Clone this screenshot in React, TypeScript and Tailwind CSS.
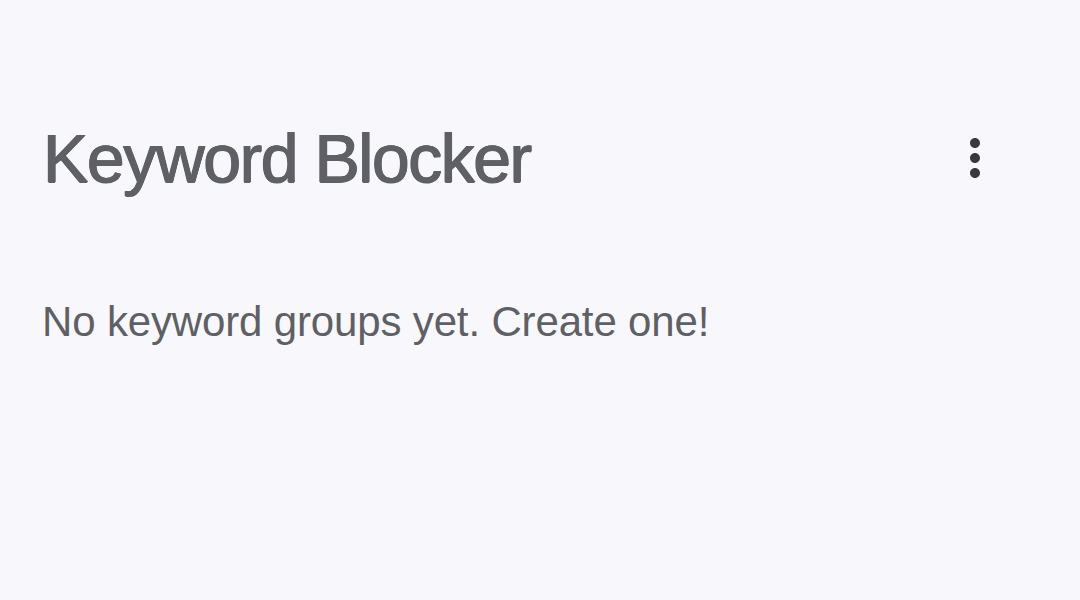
import React from "react";

export default function App() {
  return (
    <div className="w-[1080px] h-[600px] bg-[#f8f8fc] overflow-hidden" style={{ fontFamily: '"Liberation Sans", Arial, sans-serif' }}>
      <div className="flex items-center justify-between pl-[43px] pr-[75px] pt-[120px]">
        <h1 className="text-[68px] leading-[76px] font-normal text-[#5f6066] tracking-[-1.5px] [text-shadow:0.7px_0_0_#5f6066,-0.7px_0_0_#5f6066,0_0.5px_0_#5f6066,0_-0.5px_0_#5f6066]">
          Keyword Blocker
        </h1>
        <svg width="60" height="60" viewBox="0 0 24 24" fill="#38383d">
          <path d="M12 8c1.1 0 2-.9 2-2s-.9-2-2-2-2 .9-2 2 .9 2 2 2zm0 2c-1.1 0-2 .9-2 2s.9 2 2 2 2-.9 2-2-.9-2-2-2zm0 6c-1.1 0-2 .9-2 2s.9 2 2 2 2-.9 2-2-.9-2-2-2z" />
        </svg>
      </div>
      <p className="pl-[42px] mt-[101px] text-[42px] leading-[50px] text-[#5f6066] tracking-[-0.15px]">
        No keyword groups yet. Create one!
      </p>
    </div>
  );
}
